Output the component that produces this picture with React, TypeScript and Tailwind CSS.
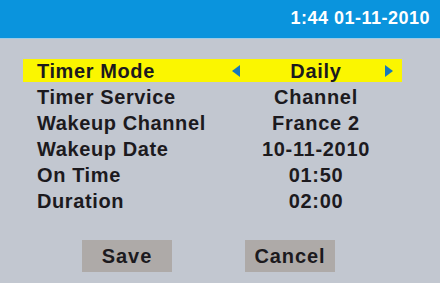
const rows = [
  { label: 'Timer Mode', value: 'Daily', active: true },
  { label: 'Timer Service', value: 'Channel' },
  { label: 'Wakeup Channel', value: 'France 2' },
  { label: 'Wakeup Date', value: '10-11-2010' },
  { label: 'On Time', value: '01:50' },
  { label: 'Duration', value: '02:00' },
];

function Arrow({ dir }: { dir: 'left' | 'right' }) {
  return (
    <svg width="8" height="12" viewBox="0 0 8 12" className="shrink-0">
      {dir === 'left' ? (
        <polygon points="8,0 8,12 0,6" fill="#1679bd" />
      ) : (
        <polygon points="0,0 0,12 8,6" fill="#1679bd" />
      )}
    </svg>
  );
}

export default function App() {
  return (
    <div
      className="w-[440px] h-[283px] bg-[#c2c7d0] flex flex-col text-[#1c1a1e] overflow-hidden"
      style={{ fontFamily: '"Liberation Sans", Arial, sans-serif' }}
    >
      <div className="h-[39px] bg-[#0a94dd] border-b border-[#9ccbe6] flex items-center justify-end pr-[10px]">
        <span className="text-white font-bold text-[18px] tracking-[0.5px] -mt-[2px]">1:44 01-11-2010</span>
      </div>

      <div className="flex flex-col mt-[20px] ml-[23px] w-[379px]">
        {rows.map((row) => (
          <div
            key={row.label}
            className={`flex items-center ${row.active ? 'bg-[#fbf600] h-[23px] mb-[2px]' : 'h-[26px]'}`}
          >
            <div className="w-[204px] pl-[14px] font-bold text-[20px] tracking-[0.6px] leading-none">
              {row.label}
            </div>
            <div className="flex-1 flex items-center">
              <div className="w-[13px] pl-[5px] flex">{row.active && <Arrow dir="left" />}</div>
              <div className="w-[152px] text-center font-bold text-[20px] tracking-[0.7px] leading-none">
                {row.value}
              </div>
              {row.active && (
                <div className="-ml-[7px] flex">
                  <Arrow dir="right" />
                </div>
              )}
            </div>
          </div>
        ))}
      </div>

      <div className="flex mt-[26px] ml-[82px] gap-[73px]">
        <div className="w-[90px] h-[32px] bg-[#aeaaa8] flex items-center justify-center font-bold text-[20px] tracking-[0.9px]">
          Save
        </div>
        <div className="w-[90px] h-[32px] bg-[#aeaaa8] flex items-center justify-center font-bold text-[20px] tracking-[0.9px]">
          Cancel
        </div>
      </div>
    </div>
  );
}
